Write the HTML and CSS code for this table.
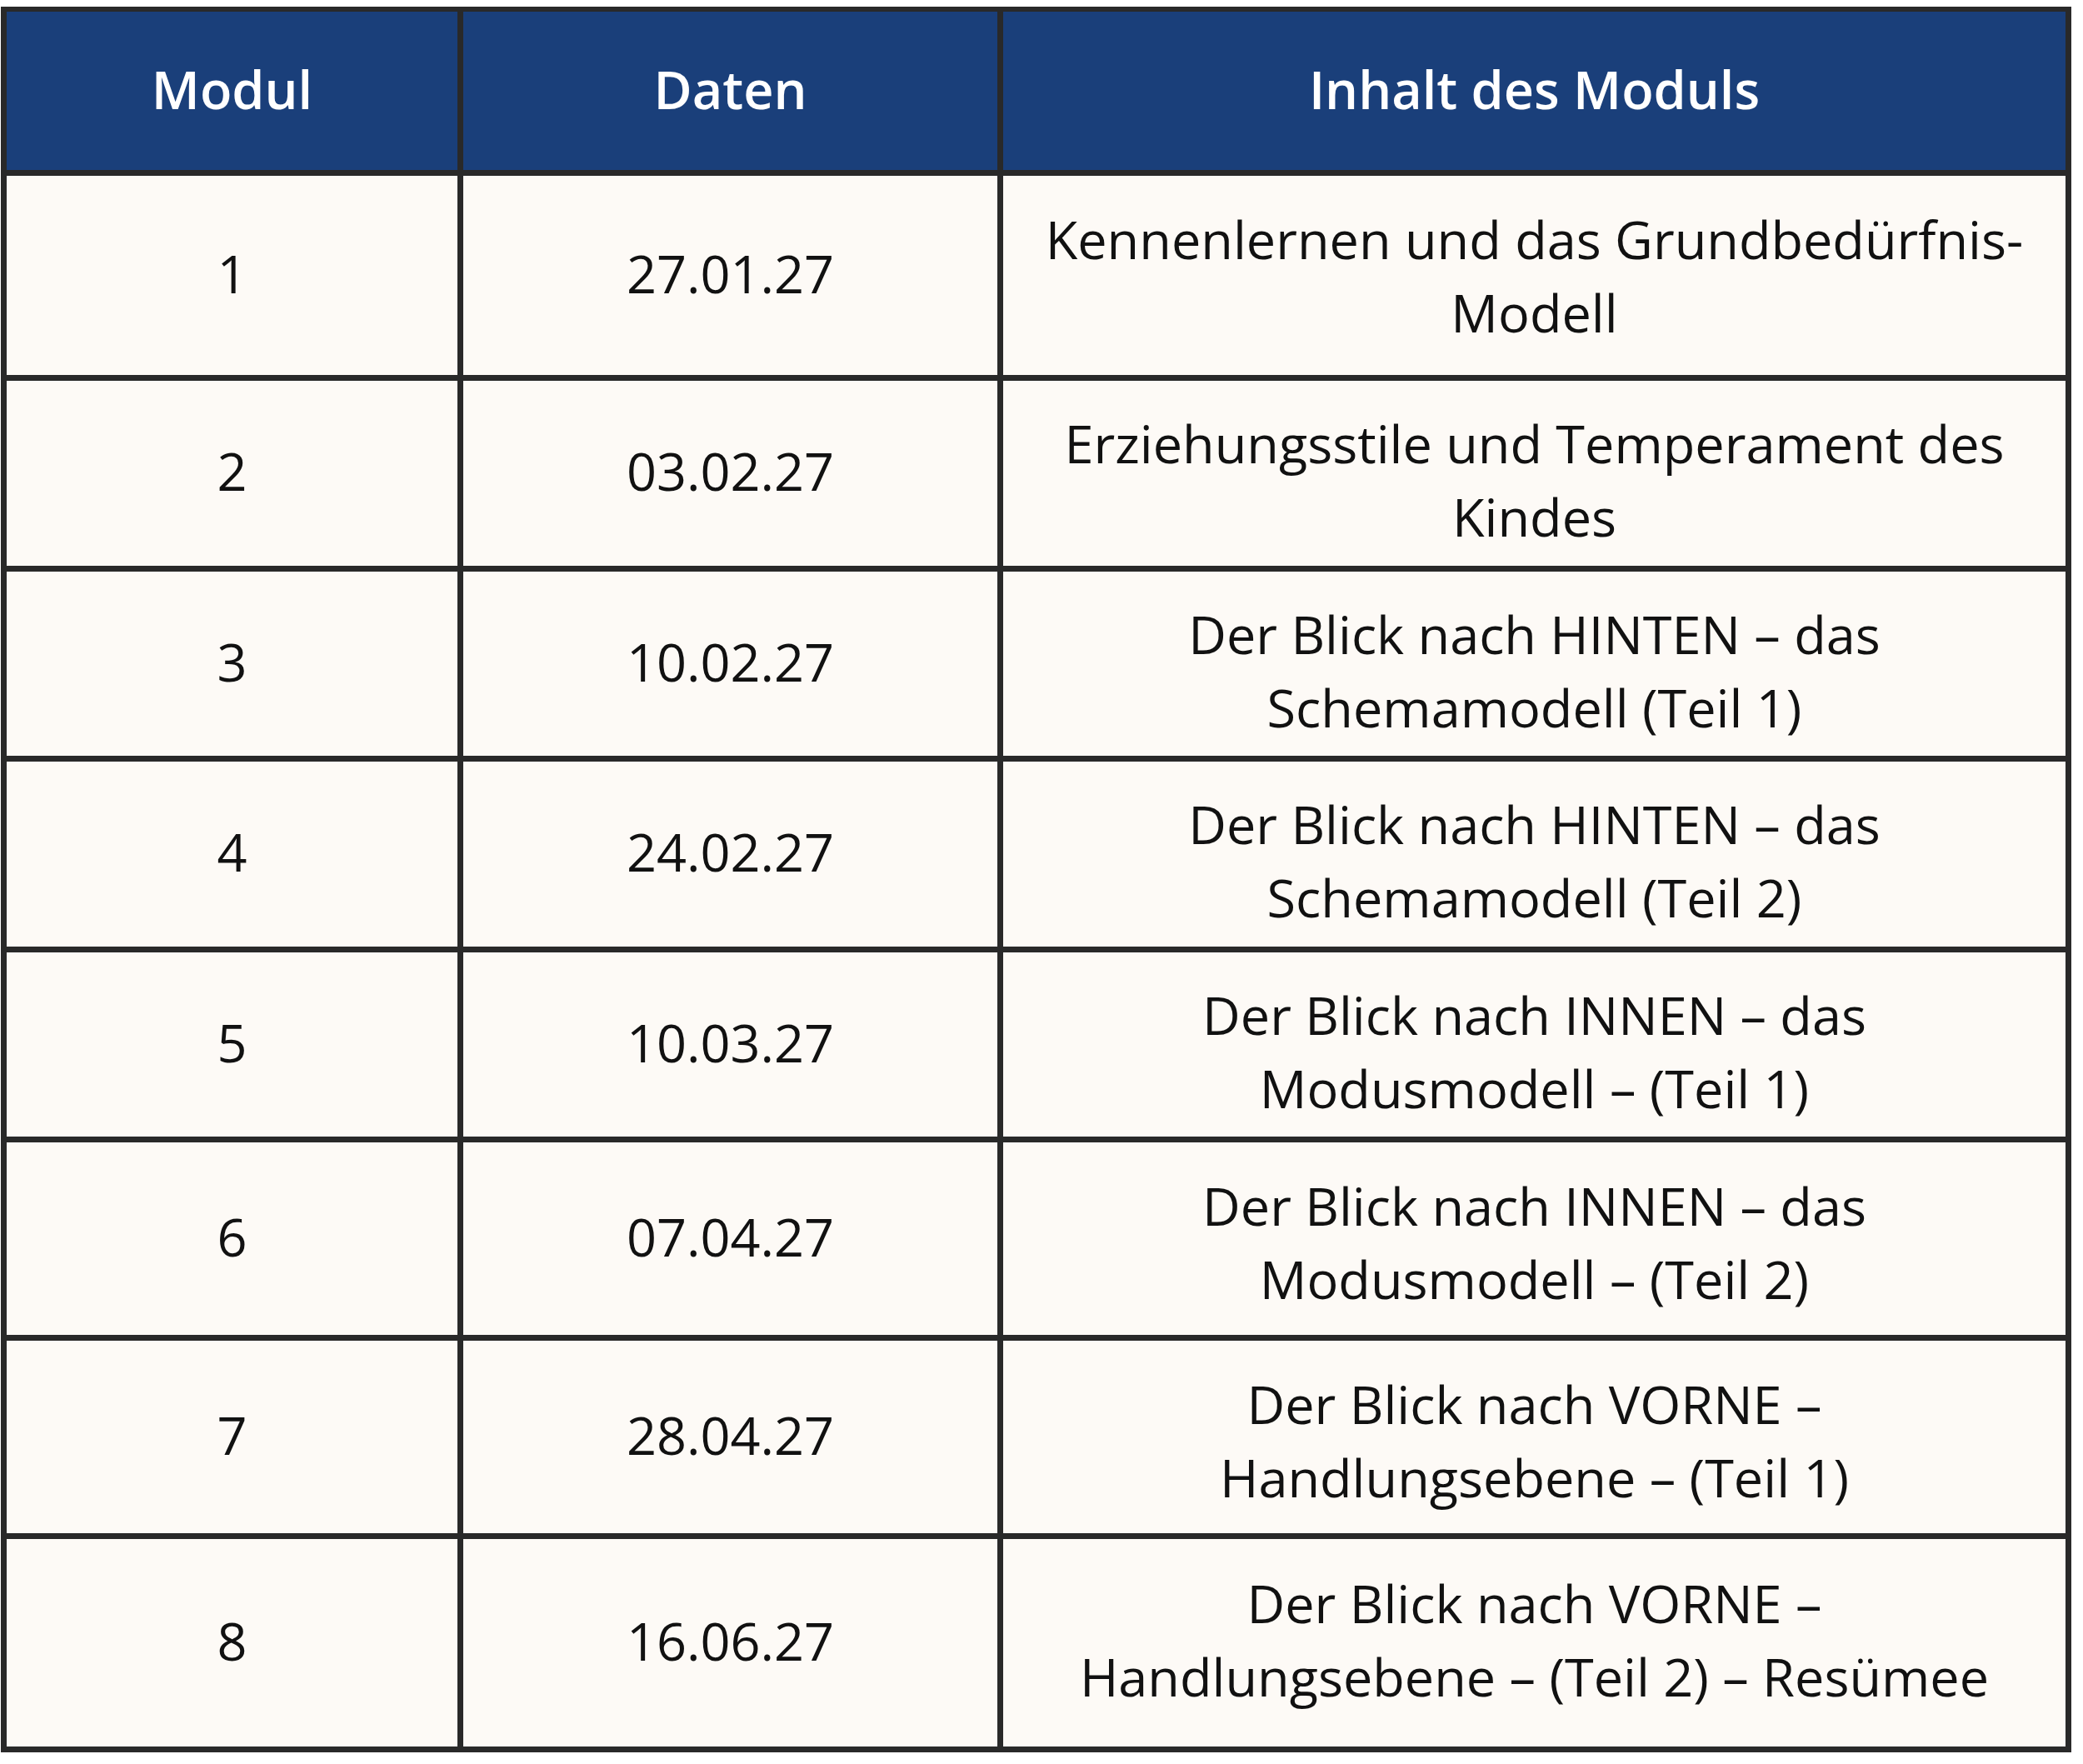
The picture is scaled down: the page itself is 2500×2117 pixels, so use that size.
FILE: index.html
```html
<!DOCTYPE html>
<html lang="de">
<head>
<meta charset="utf-8">
<title>Module</title>
<link rel="stylesheet" href="styles.css">
</head>
<body>
<div class="table">
  <div class="cell head">Modul</div>
  <div class="cell head">Daten</div>
  <div class="cell head">Inhalt des Moduls</div>

  <div class="cell num">1</div>
  <div class="cell num">27.01.27</div>
  <div class="cell text"><span>Kennenlernen und das Grundbedürfnis-<br>Modell</span></div>

  <div class="cell num">2</div>
  <div class="cell num">03.02.27</div>
  <div class="cell text low"><span>Erziehungsstile und Temperament des<br>Kindes</span></div>

  <div class="cell num">3</div>
  <div class="cell num">10.02.27</div>
  <div class="cell text low"><span>Der Blick nach HINTEN – das<br>Schemamodell (Teil 1)</span></div>

  <div class="cell num">4</div>
  <div class="cell num">24.02.27</div>
  <div class="cell text low"><span>Der Blick nach HINTEN – das<br>Schemamodell (Teil 2)</span></div>

  <div class="cell num">5</div>
  <div class="cell num">10.03.27</div>
  <div class="cell text low"><span>Der Blick nach INNEN – das<br>Modusmodell – (Teil 1)</span></div>

  <div class="cell num">6</div>
  <div class="cell num">07.04.27</div>
  <div class="cell text mid"><span>Der Blick nach INNEN – das<br>Modusmodell – (Teil 2)</span></div>

  <div class="cell num">7</div>
  <div class="cell num">28.04.27</div>
  <div class="cell text mid"><span>Der Blick nach VORNE –<br>Handlungsebene – (Teil 1)</span></div>

  <div class="cell num">8</div>
  <div class="cell num">16.06.27</div>
  <div class="cell text high"><span>Der Blick nach VORNE –<br>Handlungsebene – (Teil 2) – Resümee</span></div>
</div>
</body>
</html>
```

FILE: styles.css
```css
html, body {
  margin: 0;
  padding: 0;
  background: #ffffff;
}

body {
  font-family: "Open Sans", "Noto Sans", "Liberation Sans", sans-serif;
  color: #111111;
}

.table {
  display: grid;
  grid-template-columns: 541px 641px 1275px;
  grid-template-rows: 190px 239px 222px 221px 222px 221px 231px 231px 249px;
  gap: 7px;
  padding: 6px 7px 7px 7px;
  margin: 8px 0 0 1px;
  width: max-content;
  background: #292929;
}

.cell {
  display: flex;
  align-items: center;
  justify-content: center;
  text-align: center;
  background: #fdfaf6;
  font-size: 63px;
  line-height: 88px;
  font-weight: 400;
}

.head {
  background: #1a3f7a;
  color: #ffffff;
  font-weight: 600;
  padding-bottom: 5px;
}

.num {
  padding-bottom: 6px;
}

.text span {
  display: block;
}

.low span {
  padding-top: 16px;
}

.mid span {
  padding-top: 9px;
}

.high span {
  padding-bottom: 8px;
}
```
